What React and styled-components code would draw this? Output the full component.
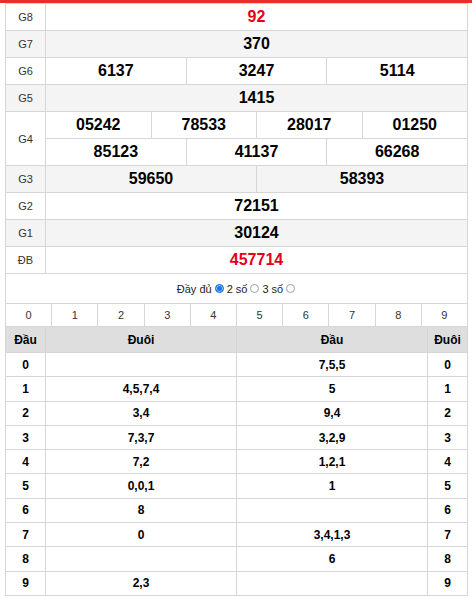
import styled, { createGlobalStyle } from 'styled-components';

const Global = createGlobalStyle`
  body {
    margin: 0;
    background: #fff;
    font-family: "Liberation Sans", Arial, sans-serif;
    color: #000;
  }
`

const TopBar = styled.div`
  height: 3px;
  background: #ee2b2b;
`

const Box = styled.div`
  margin-left: 5px;
  width: 463px;
  box-sizing: border-box;
  border: 1px solid #d6d6d6;
`

const PrizeRow = styled.div`
  display: flex;
  background: ${p => (p.$alt ? '#f4f4f4' : '#fff')};
  border-bottom: 1px solid #d6d6d6;
`

const Label = styled.div`
  width: 39px;
  flex: none;
  border-right: 1px solid #d6d6d6;
  display: flex;
  align-items: center;
  justify-content: center;
  font-size: 11px;
  color: #333;
`

const Numbers = styled.div`
  flex: 1;
  display: flex;
  flex-direction: column;
`

const Line = styled.div`
  display: flex;
  height: 26px;
  & + & {
    border-top: 1px solid #d6d6d6;
  }
`

const Num = styled.div`
  flex: 1;
  display: flex;
  align-items: center;
  justify-content: center;
  font-size: 16px;
  font-weight: bold;
  color: ${p => (p.$red ? '#e3001b' : '#000')};
  border-right: 1px solid #d6d6d6;
  &:last-child {
    border-right: none;
  }
`

const Filter = styled.div`
  height: 29px;
  display: flex;
  align-items: center;
  justify-content: center;
  font-size: 11px;
  color: #222;
  border-bottom: 1px solid #d6d6d6;
  padding-left: 2px;
  white-space: pre;
`

const Radio = styled.span`
  display: inline-block;
  width: 7px;
  height: 7px;
  border-radius: 50%;
  margin: 0 3px 0 3px;
  border: 1px solid ${p => (p.$on ? '#1a73e8' : '#a0a0a0')};
  background: ${p => (p.$on ? '#1a73e8' : '#fff')};
  box-shadow: ${p => (p.$on ? 'inset 0 0 0 1px #9cc2f5' : 'none')};
`

const DigitRow = styled.div`
  display: flex;
  height: 22px;
  border-bottom: 1px solid #d6d6d6;
`

const Digit = styled.div`
  flex: 1;
  display: flex;
  align-items: center;
  justify-content: center;
  font-size: 11px;
  color: #333;
  border-right: 1px solid #d6d6d6;
  &:last-child {
    border-right: none;
  }
`

const LotoRow = styled.div`
  display: grid;
  grid-template-columns: 40px 191px 191px 39px;
  height: ${p => (p.$head ? '25px' : '23.3px')};
  background: ${p => (p.$head ? '#dedede' : '#fff')};
  border-bottom: 1px solid #d6d6d6;
  &:last-child {
    border-bottom: none;
  }
`

const LotoCell = styled.div`
  display: flex;
  align-items: center;
  justify-content: center;
  font-size: 12px;
  font-weight: bold;
  color: #000;
  border-right: 1px solid #d6d6d6;
  &:last-child {
    border-right: none;
  }
`

const prizes = [
  { label: 'G8', lines: [['92']], red: true },
  { label: 'G7', lines: [['370']] },
  { label: 'G6', lines: [['6137', '3247', '5114']] },
  { label: 'G5', lines: [['1415']] },
  { label: 'G4', lines: [['05242', '78533', '28017', '01250'], ['85123', '41137', '66268']] },
  { label: 'G3', lines: [['59650', '58393']] },
  { label: 'G2', lines: [['72151']] },
  { label: 'G1', lines: [['30124']] },
  { label: 'ĐB', lines: [['457714']], red: true },
]

const loto = [
  ['', '7,5,5'],
  ['4,5,7,4', '5'],
  ['3,4', '9,4'],
  ['7,3,7', '3,2,9'],
  ['7,2', '1,2,1'],
  ['0,0,1', '1'],
  ['8', ''],
  ['0', '3,4,1,3'],
  ['', '6'],
  ['2,3', ''],
]

const App = () => {
  return (
    <>
      <Global />
      <TopBar />
      <Box>
        {prizes.map((p, i) => (
          <PrizeRow key={p.label} $alt={i % 2 === 1}>
            <Label>{p.label}</Label>
            <Numbers>
              {p.lines.map((line, j) => (
                <Line key={j}>
                  {line.map(n => (
                    <Num key={n} $red={p.red}>{n}</Num>
                  ))}
                </Line>
              ))}
            </Numbers>
          </PrizeRow>
        ))}
        <Filter>
          {'Đầy đủ'}<Radio $on />{'2 số'}<Radio />{'3 số'}<Radio />
        </Filter>
        <DigitRow>
          {[0, 1, 2, 3, 4, 5, 6, 7, 8, 9].map(d => (
            <Digit key={d}>{d}</Digit>
          ))}
        </DigitRow>
        <LotoRow $head>
          <LotoCell>Đầu</LotoCell>
          <LotoCell>Đuôi</LotoCell>
          <LotoCell>Đầu</LotoCell>
          <LotoCell>Đuôi</LotoCell>
        </LotoRow>
        {loto.map((r, i) => (
          <LotoRow key={i}>
            <LotoCell>{i}</LotoCell>
            <LotoCell>{r[0]}</LotoCell>
            <LotoCell>{r[1]}</LotoCell>
            <LotoCell>{i}</LotoCell>
          </LotoRow>
        ))}
      </Box>
    </>
  );
};
export default App;
